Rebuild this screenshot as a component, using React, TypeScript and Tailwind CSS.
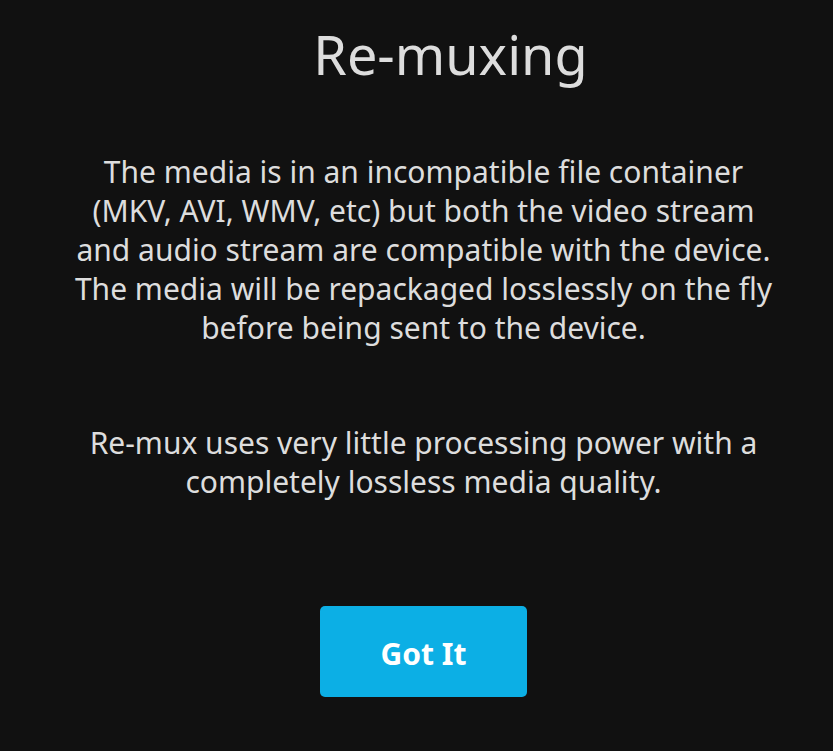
export default function App() {
  return (
    <div
      className="min-h-[751px] w-full bg-[#111111] flex flex-col items-center pl-[14px] text-[#dddddd]"
      style={{ fontFamily: '"Noto Sans", sans-serif' }}
    >
      <h1 className="mt-[27px] pl-[54px] text-[54px] leading-[54px] font-normal">Re-muxing</h1>
      <div className="mt-[71px] w-[710px] text-center text-[30px] leading-[39px]">
        <p>
          The media is in an incompatible file container (MKV, AVI, WMV, etc) but both the video stream and audio
          stream are compatible with the device. The media will be repackaged losslessly on the fly before being sent
          to the device.
        </p>
        <p className="mt-[76px]">Re-mux uses very little processing power with a completely lossless media quality.</p>
      </div>
      <button className="mt-[105px] h-[91px] w-[207px] rounded-[5px] bg-[#0cafe5] pt-[4px] text-[30px] font-bold text-white">
        Got It
      </button>
    </div>
  );
}
